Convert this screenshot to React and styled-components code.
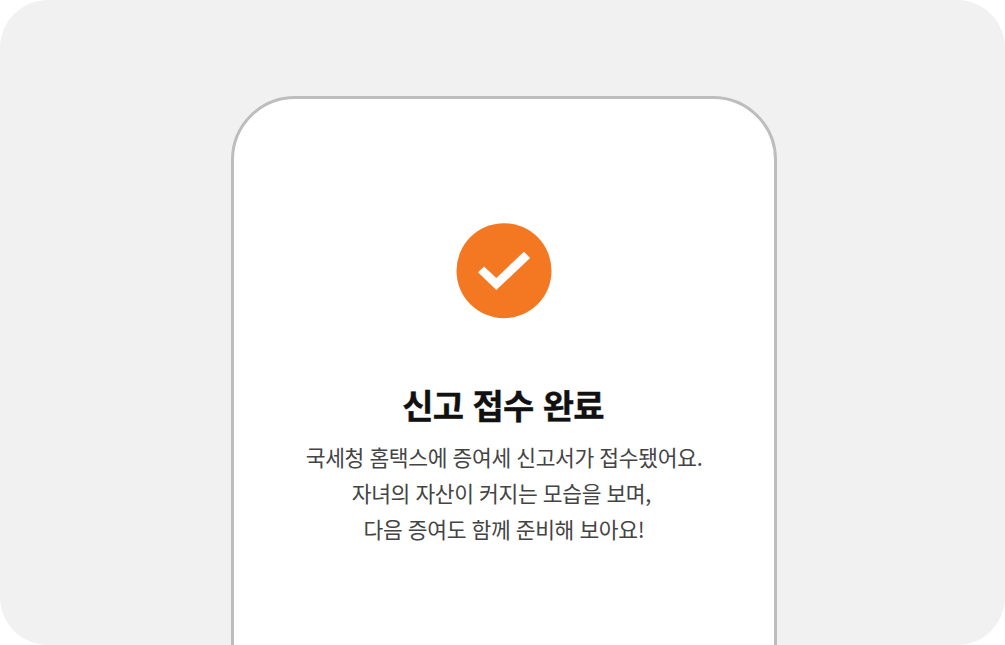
import React from 'react';
import styled, { createGlobalStyle } from 'styled-components';

const GlobalStyle = createGlobalStyle`
  * { box-sizing: border-box; }
  body { margin: 0; background: #fff; font-family: "Noto Sans CJK KR", sans-serif; }
`;

const Stage = styled.main`
  display: flex;
  justify-content: center;
  width: 1005px;
  height: 645px;
  padding: 96px 0 0 3px;
  border-radius: 48px;
  background: #f1f1f1;
  overflow: hidden;
`;

const Phone = styled.section`
  display: flex;
  flex-direction: column;
  align-items: center;
  width: 546px;
  height: 700px;
  flex-shrink: 0;
  padding-top: 124px;
  border: 3px solid #bdbdbd;
  border-radius: 64px;
  background: #fff;
`;

const Badge = styled.svg`
  display: block;
  width: 96px;
  height: 96px;
`;

const Title = styled.h1`
  margin: 60px 0 0;
  padding-right: 2px;
  font-size: 34px;
  line-height: 52px;
  font-weight: 700;
  letter-spacing: -0.8px;
  word-spacing: 2.4px;
  color: #111;
  -webkit-text-stroke: 0.4px #111;
  white-space: nowrap;
`;

const Message = styled.p`
  margin: 8px 0 0;
  font-size: 21.5px;
  line-height: 36px;
  letter-spacing: -0.32px;
  word-spacing: 0.8px;
  color: #444;
  text-align: center;
  white-space: nowrap;
`;

const Line = styled.span`
  display: block;
`;

export default function App() {
  return (
    <>
      <GlobalStyle />
      <Stage>
        <Phone>
          <Badge viewBox="0 0 96 96" aria-hidden="true">
            <circle cx="48" cy="47.7" r="47.5" fill="#f47721" />
            <path d="M22 49.3L28.1 43.6L40.3 54.9L68 28.7L74.1 35L40.3 67Z" fill="#fff" />
          </Badge>
          <Title>신고 접수 완료</Title>
          <Message>
            <Line>국세청 홈택스에 증여세 신고서가 접수됐어요.</Line>
            <Line>자녀의 자산이 커지는 모습을 보며,{'\u00a0'}</Line>
            <Line>다음 증여도 함께 준비해 보아요!</Line>
          </Message>
        </Phone>
      </Stage>
    </>
  );
}
